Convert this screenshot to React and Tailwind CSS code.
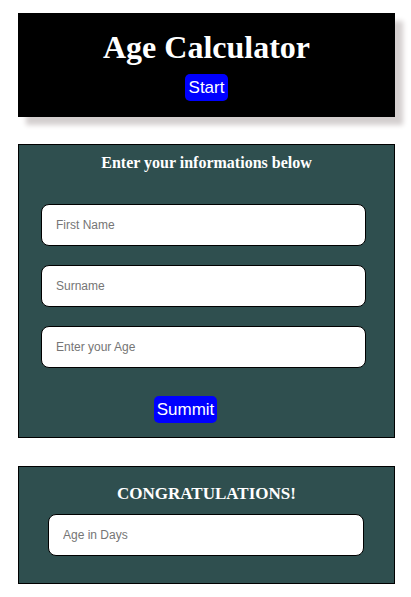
import React from "react";

const Field = ({ placeholder, className = "" }) => (
  <input
    type="text"
    placeholder={placeholder}
    className={`block h-[42px] rounded-lg border border-black bg-white pl-[14px] text-[12px] text-black outline-none placeholder:text-[#757575] ${className}`}
    style={{ fontFamily: '"Liberation Sans", Arial, sans-serif' }}
  />
);

const BlueButton = ({ children, className = "" }) => (
  <button
    className={`flex h-[27px] items-center justify-center rounded-[5px] bg-[#0000ff] text-[17px] leading-none text-white ${className}`}
    style={{ fontFamily: '"Liberation Sans", Arial, sans-serif' }}
  >
    {children}
  </button>
);

export default function App() {
  return (
    <div
      className="min-h-[597px] bg-white px-[18px] pt-[13px]"
      style={{ fontFamily: '"Liberation Serif", "Times New Roman", serif' }}
    >
      {/* Header */}
      <div className="flex w-[377px] flex-col items-center bg-black pb-[16px] pt-[16px] shadow-[8px_8px_5px_#d4cfcf]">
        <h1 className="text-[32px] font-bold leading-[37px] text-white">
          Age Calculator
        </h1>
        <BlueButton className="mt-[8px] w-[43px]">Start</BlueButton>
      </div>

      {/* Form */}
      <div className="mt-[27px] w-[377px] border border-black bg-[#2f4f4f] pb-[14px] pt-[9px]">
        <h2 className="text-center text-[16px] font-bold leading-[18px] text-white">
          Enter your informations below
        </h2>
        <div className="mt-[32px] flex flex-col gap-[19px] pl-[22px]">
          <Field placeholder="First Name" className="w-[325px]" />
          <Field placeholder="Surname" className="w-[325px]" />
          <Field placeholder="Enter your Age" className="w-[325px]" />
        </div>
        <BlueButton className="ml-[135px] mt-[28px] w-[63px]">Summit</BlueButton>
      </div>

      {/* Result */}
      <div className="mt-[28px] w-[377px] border border-black bg-[#2f4f4f] pb-[27px] pt-[18px]">
        <h2 className="text-center text-[17px] font-bold leading-[18px] text-white">
          CONGRATULATIONS!
        </h2>
        <Field placeholder="Age in Days" className="ml-[29px] mt-[11px] w-[316px]" />
      </div>
    </div>
  );
}
